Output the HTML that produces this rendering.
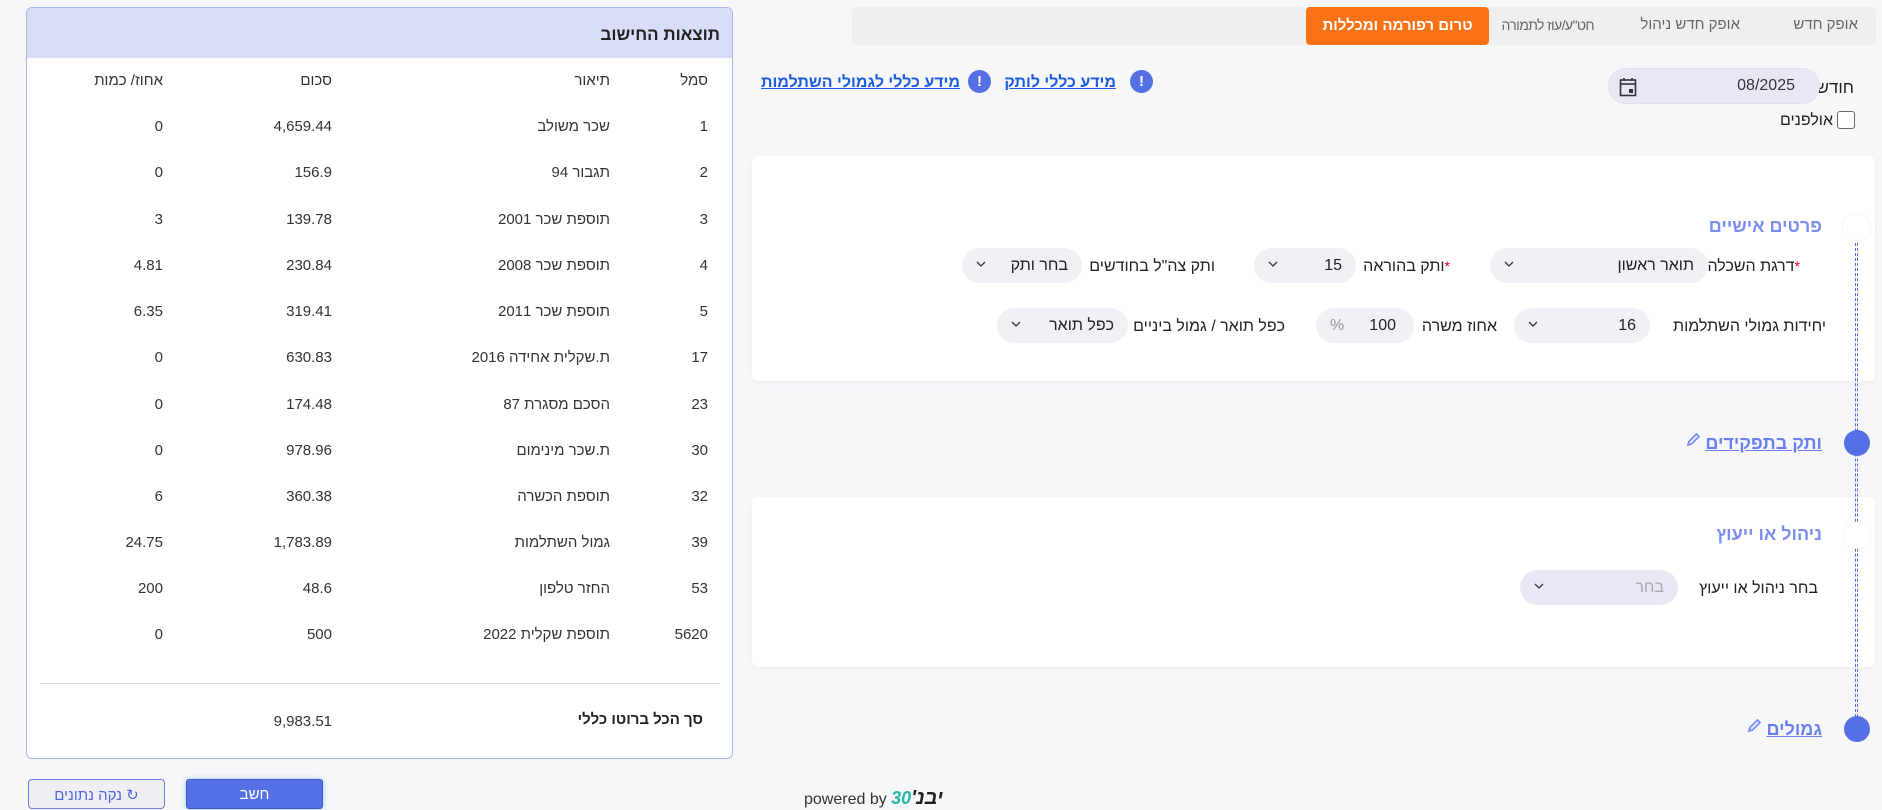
<!DOCTYPE html>
<html lang="he" dir="rtl"><head><meta charset="utf-8">
<style>
*{box-sizing:border-box;margin:0;padding:0}
body{width:1882px;height:802px;overflow:hidden;background:#f7f7fa;font-family:"Liberation Sans","DejaVu Sans",sans-serif;color:#222;position:relative}
.a{position:absolute;white-space:nowrap}
.panel{position:absolute;left:26px;top:7px;width:707px;height:752px;background:#fff;border:1px solid #a9b6ee;border-radius:6px;overflow:hidden}
.ph{height:50px;background:#d9ddf8;font-weight:bold;font-size:17px;padding:17px 12px 0 0}
.tbl .c{position:absolute;font-size:15px;color:#333}
.tabs{position:absolute;left:852px;top:7px;width:1024px;height:38px;background:#efeff2;border-radius:6px}
.tab{position:absolute;top:17px;font-size:15px;color:#666}
.sel{position:absolute;background:#f0f0f7;border-radius:18px;height:35px;font-size:16px}
.sel .v{position:absolute;right:14px;top:9px}
.sel svg{position:absolute;left:14px;top:13px}
.lbl{position:absolute;font-size:16px;color:#222;font-weight:500}
.card{position:absolute;left:752px;width:1123px;background:#fff;border-radius:6px;box-shadow:0 2px 6px rgba(0,0,0,.04)}
.h{position:absolute;color:#7b8ef0;font-weight:bold;font-size:18px}
.lnk{position:absolute;color:#6a80ee;font-weight:bold;font-size:18px;text-decoration:underline}
.star{color:#e00000}
.r{position:absolute;white-space:nowrap;font-size:15px;color:#333}
</style></head><body>

<div class="panel">
<div class="ph">תוצאות החישוב</div>
</div>
<div class="tbl">
<div class="a c" style="right:1174px;top:72px">סמל</div>
<div class="a c" style="right:1272px;top:72px">תיאור</div>
<div class="a c" style="right:1550px;top:72px">סכום</div>
<div class="a c" style="right:1719px;top:72px">אחוז/ כמות</div>
</div>
<div class="a" style="left:40px;top:683px;width:680px;height:1px;background:#ddd"></div>
<div class="a" style="right:1179px;top:711px;font-weight:bold;font-size:15px">סך הכל ברוטו כללי</div>
<div class="a" style="right:1550px;top:713px;font-size:15px;color:#333">9,983.51</div>

<div class="a" style="left:28px;top:779px;width:137px;height:30px;border:1px solid #6b7fe6;border-radius:4px;background:#efeff3;color:#5066dd;font-size:15px;text-align:center;padding-top:6px">↻ נקה נתונים</div>
<div class="a" style="left:186px;top:779px;width:137px;height:30px;border:1px solid #3b5bc7;border-radius:3px;background:#5570e4;color:#fff;font-size:15px;text-align:center;padding-top:6px;box-shadow:0 0 6px #9fd0f5">חשב</div>
<div class="a" style="left:804px;top:787px;font-size:16px;color:#333;direction:ltr">powered by <b style="font-style:italic;font-size:20px;color:#222">יבנ'</b><span style="color:#23b5a8;font-weight:bold;font-style:italic;font-size:18px">30</span></div>

<div class="tabs">
<div class="a" style="left:454px;top:0;width:183px;height:38px;background:#f97316;border-radius:4px;color:#fff;font-weight:bold;font-size:15px;text-align:center;padding-top:10px">טרום רפורמה ומכללות</div>
</div>
<div class="tab a" style="right:24px;top:16px">אופק חדש</div>
<div class="tab a" style="right:142px;top:16px">אופק חדש ניהול</div>
<div class="tab a" style="right:288px;top:17px;font-size:14px;letter-spacing:-0.6px">חט"ע/עוז לתמורה</div>

<div class="lbl" style="right:28px;top:78px;font-size:17px">חודש <span class="star">*</span></div>
<div class="a" style="left:1608px;top:68px;width:212px;height:36px;background:#e8e8f4;border-radius:18px;border:1px solid #e0e0ee">
<span class="a" style="right:24px;top:8px;font-size:16px;color:#333">08/2025</span>
<svg class="a" style="left:10px;top:8px" width="18" height="20" viewBox="0 0 18 20"><rect x="1.5" y="3" width="15" height="15.5" fill="none" stroke="#333" stroke-width="1.6"/><line x1="1.5" y1="7" x2="16.5" y2="7" stroke="#333" stroke-width="1.6"/><line x1="5" y1="1" x2="5" y2="4" stroke="#333" stroke-width="1.6"/><line x1="13" y1="1" x2="13" y2="4" stroke="#333" stroke-width="1.6"/><rect x="10" y="12" width="4" height="4" fill="#333"/></svg>
</div>
<div class="a" style="left:1837px;top:111px;width:18px;height:18px;border:1.5px solid #666;border-radius:3px;background:#fff"></div>
<div class="lbl" style="right:49px;top:112px;font-size:16px">אולפנים</div>

<div class="a" style="right:766px;top:74px;color:#1a5be0;font-weight:bold;font-size:16px;text-decoration:underline">מידע כללי לותק</div>
<div class="a" style="left:1130px;top:70px;width:23px;height:23px;border-radius:50%;background:#5570e4;color:#fff;font-weight:bold;font-size:15px;text-align:center;line-height:23px">!</div>
<div class="a" style="right:922px;top:74px;color:#1a5be0;font-weight:bold;font-size:16px;text-decoration:underline">מידע כללי לגמולי השתלמות</div>
<div class="a" style="left:968px;top:70px;width:23px;height:23px;border-radius:50%;background:#5570e4;color:#fff;font-weight:bold;font-size:15px;text-align:center;line-height:23px">!</div>

<div class="card" style="top:156px;height:225px"></div>
<div class="card" style="top:497px;height:170px"></div>

<!-- timeline -->
<div class="a" style="left:1855px;top:238px;width:3px;height:494px;border-left:1px dashed #5570e4;border-right:1px dashed #5570e4"></div>
<div class="a" style="left:1843px;top:214px;width:27px;height:27px;border-radius:50%;background:#fff;box-shadow:0 0 3px rgba(0,0,0,.08)"></div>
<div class="a" style="left:1844px;top:430px;width:26px;height:26px;border-radius:50%;background:#5570e4"></div>
<div class="a" style="left:1843px;top:522px;width:27px;height:27px;border-radius:50%;background:#fff;box-shadow:0 0 3px rgba(0,0,0,.08)"></div>
<div class="a" style="left:1844px;top:716px;width:26px;height:26px;border-radius:50%;background:#5570e4"></div>

<div class="h" style="right:60px;top:216px">פרטים אישיים</div>
<div class="lnk" style="right:60px;top:433px">ותק בתפקידים</div>
<svg class="a" style="left:1686px;top:432px" width="15" height="15" viewBox="0 0 15 15"><path d="M2 13 L3 9.5 L10.5 2 L13 4.5 L5.5 12 Z" fill="none" stroke="#7b8ef0" stroke-width="1.8"/></svg>
<div class="h" style="right:60px;top:524px">ניהול או ייעוץ</div>
<div class="lnk" style="right:60px;top:719px">גמולים</div>
<svg class="a" style="left:1747px;top:718px" width="15" height="15" viewBox="0 0 15 15"><path d="M2 13 L3 9.5 L10.5 2 L13 4.5 L5.5 12 Z" fill="none" stroke="#7b8ef0" stroke-width="1.8"/></svg>

<!-- row 1 -->
<div class="lbl" style="right:82px;top:258px"><span class="star" style="vertical-align:top;font-size:14px">*</span>דרגת השכלה</div>
<div class="sel" style="left:1490px;top:248px;width:218px"><span class="v">תואר ראשון</span><svg width="10" height="6"><polyline points="1,1 5,5 9,1" fill="none" stroke="#333" stroke-width="1.3"/></svg></div>
<div class="lbl" style="right:432px;top:258px"><span class="star" style="vertical-align:top;font-size:14px">*</span>ותק בהוראה</div>
<div class="sel" style="left:1254px;top:248px;width:102px"><span class="v">15</span><svg width="10" height="6"><polyline points="1,1 5,5 9,1" fill="none" stroke="#333" stroke-width="1.3"/></svg></div>
<div class="lbl" style="right:667px;top:258px">ותק צה"ל בחודשים</div>
<div class="sel" style="left:962px;top:248px;width:120px"><span class="v">בחר ותק</span><svg width="10" height="6"><polyline points="1,1 5,5 9,1" fill="none" stroke="#333" stroke-width="1.3"/></svg></div>

<!-- row 2 -->
<div class="lbl" style="right:56px;top:318px">יחידות גמולי השתלמות</div>
<div class="sel" style="left:1514px;top:308px;width:136px"><span class="v">16</span><svg width="10" height="6"><polyline points="1,1 5,5 9,1" fill="none" stroke="#333" stroke-width="1.3"/></svg></div>
<div class="lbl" style="right:385px;top:318px">אחוז משרה</div>
<div class="sel" style="left:1316px;top:308px;width:98px"><span class="v" style="right:18px">100</span><span class="a" style="left:14px;top:9px;color:#999">%</span></div>
<div class="lbl" style="right:597px;top:318px">כפל תואר / גמול ביניים</div>
<div class="sel" style="left:997px;top:308px;width:131px"><span class="v">כפל תואר</span><svg width="10" height="6"><polyline points="1,1 5,5 9,1" fill="none" stroke="#333" stroke-width="1.3"/></svg></div>

<div class="lbl" style="right:64px;top:580px">בחר ניהול או ייעוץ</div>
<div class="sel" style="left:1520px;top:570px;width:158px;background:#e8e8f4"><span class="v" style="color:#aaa">בחר</span><svg width="10" height="6"><polyline points="1,1 5,5 9,1" fill="none" stroke="#333" stroke-width="1.3"/></svg></div>

<div>
<div class="r" style="right:1174px;top:118px">1</div><div class="r" style="right:1272px;top:118px">שכר משולב</div><div class="r" style="right:1550px;top:118px">4,659.44</div><div class="r" style="right:1719px;top:118px">0</div>
<div class="r" style="right:1174px;top:164px">2</div><div class="r" style="right:1272px;top:164px">תגבור 94</div><div class="r" style="right:1550px;top:164px">156.9</div><div class="r" style="right:1719px;top:164px">0</div>
<div class="r" style="right:1174px;top:211px">3</div><div class="r" style="right:1272px;top:211px">תוספת שכר 2001</div><div class="r" style="right:1550px;top:211px">139.78</div><div class="r" style="right:1719px;top:211px">3</div>
<div class="r" style="right:1174px;top:257px">4</div><div class="r" style="right:1272px;top:257px">תוספת שכר 2008</div><div class="r" style="right:1550px;top:257px">230.84</div><div class="r" style="right:1719px;top:257px">4.81</div>
<div class="r" style="right:1174px;top:303px">5</div><div class="r" style="right:1272px;top:303px">תוספת שכר 2011</div><div class="r" style="right:1550px;top:303px">319.41</div><div class="r" style="right:1719px;top:303px">6.35</div>
<div class="r" style="right:1174px;top:349px">17</div><div class="r" style="right:1272px;top:349px">ת.שקלית אחידה 2016</div><div class="r" style="right:1550px;top:349px">630.83</div><div class="r" style="right:1719px;top:349px">0</div>
<div class="r" style="right:1174px;top:396px">23</div><div class="r" style="right:1272px;top:396px">הסכם מסגרת 87</div><div class="r" style="right:1550px;top:396px">174.48</div><div class="r" style="right:1719px;top:396px">0</div>
<div class="r" style="right:1174px;top:442px">30</div><div class="r" style="right:1272px;top:442px">ת.שכר מינימום</div><div class="r" style="right:1550px;top:442px">978.96</div><div class="r" style="right:1719px;top:442px">0</div>
<div class="r" style="right:1174px;top:488px">32</div><div class="r" style="right:1272px;top:488px">תוספת הכשרה</div><div class="r" style="right:1550px;top:488px">360.38</div><div class="r" style="right:1719px;top:488px">6</div>
<div class="r" style="right:1174px;top:534px">39</div><div class="r" style="right:1272px;top:534px">גמול השתלמות</div><div class="r" style="right:1550px;top:534px">1,783.89</div><div class="r" style="right:1719px;top:534px">24.75</div>
<div class="r" style="right:1174px;top:580px">53</div><div class="r" style="right:1272px;top:580px">החזר טלפון</div><div class="r" style="right:1550px;top:580px">48.6</div><div class="r" style="right:1719px;top:580px">200</div>
<div class="r" style="right:1174px;top:626px">5620</div><div class="r" style="right:1272px;top:626px">תוספת שקלית 2022</div><div class="r" style="right:1550px;top:626px">500</div><div class="r" style="right:1719px;top:626px">0</div>
</div>
</body></html>
